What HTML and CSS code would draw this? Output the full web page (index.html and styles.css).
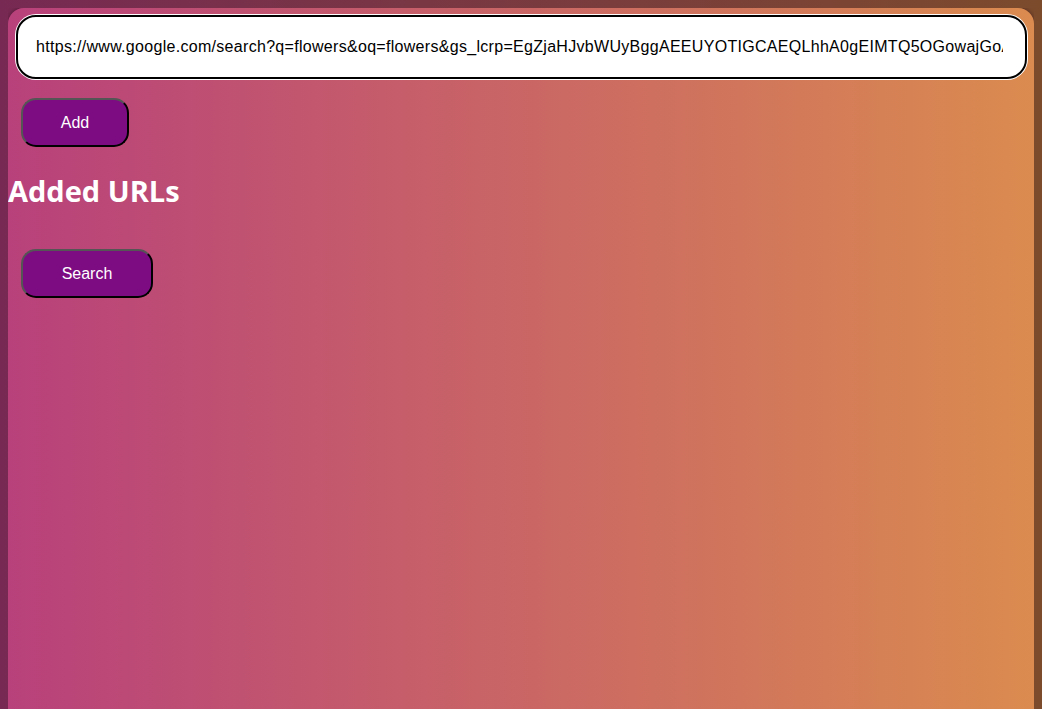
FILE: index.html
```html
<!DOCTYPE html>
<html>
<head>
<meta charset="utf-8">
<link rel="stylesheet" href="styles.css">
</head>
<body>
<div class="app">
  <input class="url-input" type="text" value="https://www.google.com/search?q=flowers&amp;oq=flowers&amp;gs_lcrp=EgZjaHJvbWUyBggAEEUYOTIGCAEQLhhA0gEIMTQ5OGowajGoAggB&amp;sourceid=chrome&amp;ie=UTF-8">
  <button class="btn btn-add">Add</button>
  <h2 class="title">Added URLs</h2>
  <ul class="url-list"></ul>
  <button class="btn btn-search">Search</button>
</div>
</body>
</html>
```
FILE: styles.css
```css
html {
  height: 100%;
  background: linear-gradient(to right, #772953, #7c4b2c);
}
body {
  margin: 8px;
  min-height: 100%;
}
.app {
  min-height: 760px;
  border-radius: 16px;
  background: linear-gradient(to right, #b8417b, #db8b4f);
  box-shadow: 0 0 4px rgba(40, 0, 20, 0.5);
  padding: 7px 0 0 0;
  display: flex;
  flex-direction: column;
  align-items: flex-start;
}
.url-input {
  box-sizing: border-box;
  width: calc(100% - 15px);
  margin: 0 7px 0 8px;
  height: 64px;
  border: 2px solid #000;
  border-radius: 20px;
  box-shadow: 0 0 0 1px #fff;
  padding: 0 22px 0 18px;
  font-family: "Liberation Sans", Arial, sans-serif;
  font-size: 16px;
  letter-spacing: 0.3px;
  color: #000;
  background: #fff;
  outline: none;
}
.btn {
  margin-left: 13px;
  height: 49px;
  border: 2px outset #000;
  border-color: #555 #000 #000 #555;
  border-radius: 15px;
  background: #7d0c83;
  color: #fff;
  font-family: "Liberation Sans", Arial, sans-serif;
  font-size: 16px;
  cursor: pointer;
}
.btn-add {
  margin-top: 19px;
  width: 108px;
}
.title {
  margin: 24px 0 0 0;
  font-family: "Open Sans", sans-serif;
  font-weight: 700;
  font-size: 29px;
  line-height: 40px;
  color: #fff;
}
.url-list {
  margin: 0;
  padding: 0;
  list-style: none;
}
.btn-search {
  margin-top: 38px;
  width: 132px;
}
```
